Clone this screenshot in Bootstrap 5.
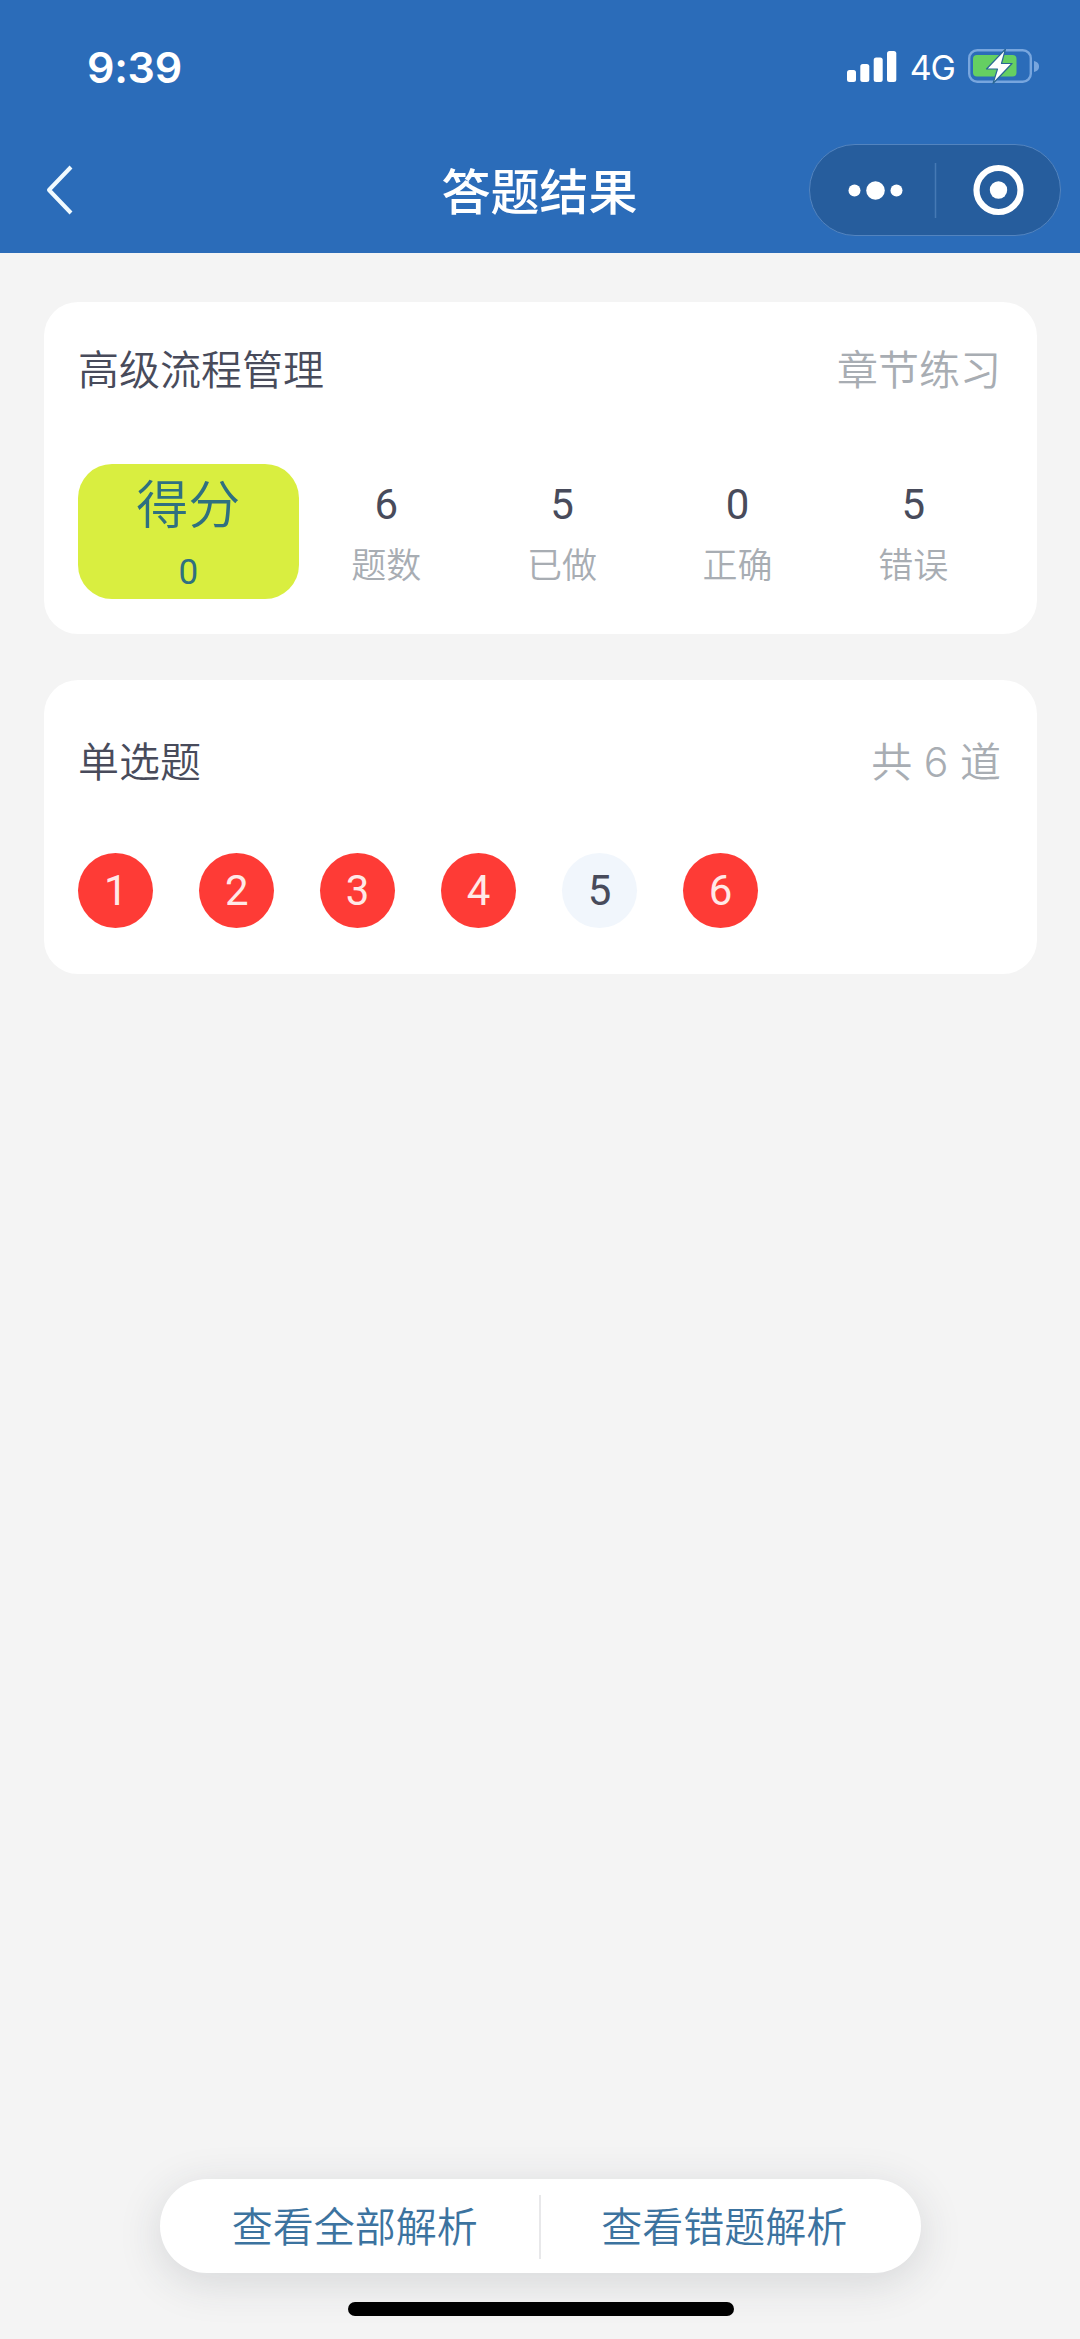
<!DOCTYPE html>
<html lang="zh-CN">
<head>
<meta charset="utf-8">
<meta name="viewport" content="width=device-width, initial-scale=1">
<title>答题结果</title>
<link href="https://cdn.jsdelivr.net/npm/bootstrap@5.3.0/dist/css/bootstrap.min.css" rel="stylesheet">
<style>
  body { background: #f4f4f4; font-family: Inter, "Noto Sans CJK SC", sans-serif; font-size: 41px; line-height: 60px; color: #484b5b; }
  .screen { width: 1080px; height: 2339px; }
  .app-head { height: 253px; background: #2b6cb9; }
  .status-bar { height: 133px; padding: 0 41px 0 87px; }
  .clock { font-size: 43px; font-weight: 600; letter-spacing: -.3px; }
  .network { font-size: 34px; letter-spacing: -1px; margin: 2px 13px 0 13px; }
  .title-bar { height: 114px; padding: 0 19px 0 46px; }
  .side { width: 224px; }
  .page-title { font-size: 49px; font-weight: 500; padding-top: 5px; }
  .capsule { width: 252px; height: 92px; background: #265d9d; border: 1px solid #5384bf; }
  .panel-card { margin: 0 43px 0 44px; border-radius: 34px; padding: 0 36px 0 34px; }
  .score-card { height: 332px; margin-top: 49px; padding-top: 38px; }
  .question-card { height: 294px; margin-top: 46px; padding-top: 52px; }
  .hint { color: #a8adb3; font-weight: 350; }
  .heading { font-weight: 350; }
  .score-row { margin-top: 64px; height: 135px; }
  .score-box { width: 221px; border-radius: 34px; background: #d9ee40; color: #2f7080; }
  .score-label { font-size: 52px; line-height: 79px; font-weight: 350; padding-top: 2px; }
  .score-value { font-family: Roboto, sans-serif; font-size: 35px; line-height: 56px; }
  .stat { width: 176px; padding-top: 11px; }
  .stat-value, .dot { font-family: Roboto, sans-serif; font-size: 42px; }
  .stat-label { font-size: 35px; line-height: 60px; }
  .question-row { gap: 45.6px; margin-top: 61px; }
  .dot { width: 75.4px; height: 75.4px; background: #fe3b36; color: #ffe9e7; padding-top: 1px; }
  .dot-blank { background: #f1f6fc; color: #484b5b; }
  .action-bar { width: 761px; height: 94px; margin: 0 0 29px 160px; padding: 2px 13px 0 11px; box-shadow: 0 9px 44px rgba(40, 50, 60, .15); }
  .action-link { color: #3c739f; font-weight: 350; }
  .divider { width: 2px; height: 64px; background: #e8e8ea; }
  .home-bar { width: 386px; height: 14px; margin: 0 0 23px 348px; background: #000; }
</style>
</head>
<body>
<div class="screen d-flex flex-column overflow-hidden">
  <header class="app-head text-white flex-shrink-0">
    <div class="status-bar d-flex align-items-center justify-content-between">
      <span class="clock">9:39</span>
      <div class="d-flex align-items-center">
        <svg width="50" height="34" viewBox="0 0 50 34" fill="#fff"><rect x="0" y="20" width="9" height="12" rx="2.5"/><rect x="13.3" y="14" width="9" height="18" rx="2.5"/><rect x="26.7" y="7.5" width="9" height="24.5" rx="2.5"/><rect x="40" y="1" width="9.3" height="31" rx="2.5"/></svg>
        <span class="network">4G</span>
        <svg width="71" height="36" viewBox="0 0 71 36"><rect x="1.2" y="1.2" width="61.6" height="31.6" rx="8" fill="none" stroke="#78a6de" stroke-width="2.4"/><rect x="5" y="6" width="43.5" height="21.5" rx="4" fill="#65cf62"/><path d="M66 12c4 1 5 3 5 5.500s-1 4.500-5 5.500z" fill="#78a6de"/><path d="M37.500 0 18.500 20h11L25 34.500 44 14.500H33.500z" fill="#fff" stroke="#2a6795" stroke-width="1.200" stroke-linejoin="round"/></svg>
      </div>
    </div>
    <div class="title-bar d-flex align-items-center justify-content-between">
      <div class="side"><svg class="d-block" width="28" height="50" viewBox="0 0 28 50" fill="none" stroke="#f0faff" stroke-width="4"><path d="M25 2 3 25 25 48" stroke-linejoin="round"/></svg></div>
      <span class="page-title">答题结果</span>
      <div class="capsule rounded-pill"><svg class="d-block" width="250" height="90" viewBox="0 0 250 90"><g fill="#fff"><circle cx="44.500" cy="45.500" r="6"/><circle cx="65.500" cy="45.500" r="9.300"/><circle cx="86.500" cy="45.500" r="6"/><circle cx="188.500" cy="45" r="8.700"/></g><path d="M125.500 18v55" stroke="#4679b4" stroke-width="1.500"/><circle cx="188.500" cy="45" r="22" fill="none" stroke="#fff" stroke-width="6.200"/></svg></div>
    </div>
  </header>

  <section class="panel-card score-card bg-white flex-shrink-0">
    <div class="d-flex justify-content-between">
      <span class="heading">高级流程管理</span><span class="hint">章节练习</span>
    </div>
    <div class="score-row d-flex text-center">
      <div class="score-box"><div class="score-label">得分</div><div class="score-value">0</div></div>
      <div class="stat"><div class="stat-value">6</div><div class="stat-label hint">题数</div></div>
      <div class="stat"><div class="stat-value">5</div><div class="stat-label hint">已做</div></div>
      <div class="stat"><div class="stat-value">0</div><div class="stat-label hint">正确</div></div>
      <div class="stat"><div class="stat-value">5</div><div class="stat-label hint">错误</div></div>
    </div>
  </section>

  <section class="panel-card question-card bg-white flex-shrink-0">
    <div class="d-flex justify-content-between">
      <span class="heading">单选题</span><span class="hint">共 6 道</span>
    </div>
    <div class="question-row d-flex">
      <span class="dot rounded-circle d-flex align-items-center justify-content-center">1</span>
      <span class="dot rounded-circle d-flex align-items-center justify-content-center">2</span>
      <span class="dot rounded-circle d-flex align-items-center justify-content-center">3</span>
      <span class="dot rounded-circle d-flex align-items-center justify-content-center">4</span>
      <span class="dot dot-blank rounded-circle d-flex align-items-center justify-content-center">5</span>
      <span class="dot rounded-circle d-flex align-items-center justify-content-center">6</span>
    </div>
  </section>

  <div class="action-bar mt-auto bg-white rounded-pill d-flex align-items-center flex-shrink-0">
    <a class="action-link flex-fill text-center text-decoration-none" href="#">查看全部解析</a>
    <span class="divider"></span>
    <a class="action-link flex-fill text-center text-decoration-none" href="#">查看错题解析</a>
  </div>
  <div class="home-bar rounded-pill flex-shrink-0"></div>
</div>
<script src="https://cdn.jsdelivr.net/npm/bootstrap@5.3.0/dist/js/bootstrap.bundle.min.js"></script>
</body>
</html>
